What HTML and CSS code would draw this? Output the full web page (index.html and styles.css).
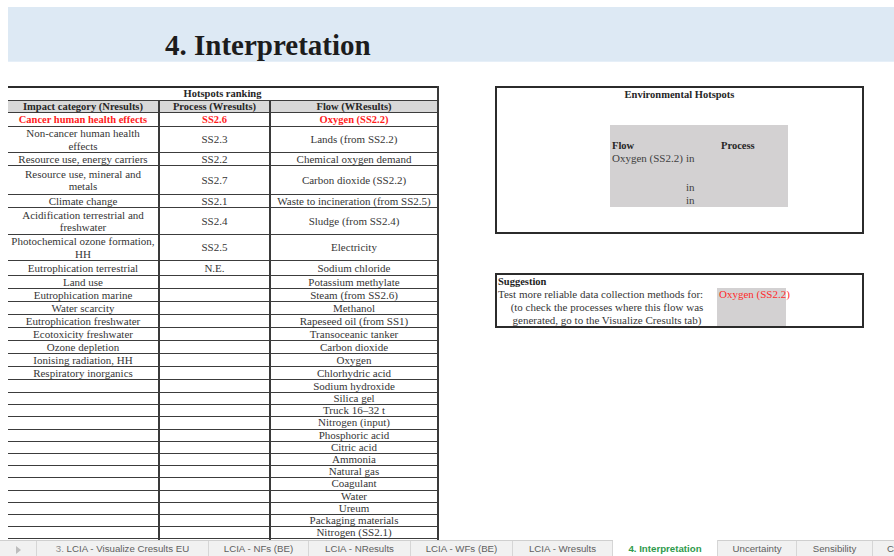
FILE: index.html
```html
<!DOCTYPE html>
<html lang="en">
<head>
<meta charset="utf-8">
<title>4. Interpretation</title>
<link rel="stylesheet" href="styles.css">
</head>
<body>
<div class="sheet">
  <header class="banner">
    <h1 class="title">4. Interpretation</h1>
  </header>

  <main class="content">
    <table class="ranking">
      <colgroup>
        <col class="c-impact">
        <col class="c-process">
        <col class="c-flow">
      </colgroup>
      <tbody>
        <tr class="r-caption"><td colspan="3" class="caption">Hotspots ranking</td></tr>
        <tr class="r-head">
          <th>Impact category (Nresults)</th>
          <th>Process (Wresults)</th>
          <th>Flow (WResults)</th>
        </tr>
        <tr class="r-top">
          <td>Cancer human health effects</td>
          <td>SS2.6</td>
          <td>Oxygen (SS2.2)</td>
        </tr>
        <tr class="r-h26 r-wrap"><td>Non-cancer human health<br>effects</td><td>SS2.3</td><td>Lands (from SS2.2)</td></tr>
        <tr class="r-h13"><td>Resource use, energy carriers</td><td>SS2.2</td><td>Chemical oxygen demand</td></tr>
        <tr class="r-h29 r-wrap"><td>Resource use, mineral and<br>metals</td><td>SS2.7</td><td>Carbon dioxide (SS2.2)</td></tr>
        <tr class="r-h13"><td>Climate change</td><td>SS2.1</td><td>Waste to incineration (from SS2.5)</td></tr>
        <tr class="r-h27 r-wrap"><td>Acidification terrestrial and<br>freshwater</td><td>SS2.4</td><td>Sludge (from SS2.4)</td></tr>
        <tr class="r-h26 r-wrap"><td>Photochemical ozone formation,<br>HH</td><td>SS2.5</td><td>Electricity</td></tr>
        <tr class="r-h15"><td>Eutrophication terrestrial</td><td>N.E.</td><td>Sodium chloride</td></tr>
        <tr class="r-h13"><td>Land use</td><td></td><td>Potassium methylate</td></tr>
        <tr class="r-h13"><td>Eutrophication marine</td><td></td><td>Steam (from SS2.6)</td></tr>
        <tr class="r-h13"><td>Water scarcity</td><td></td><td>Methanol</td></tr>
        <tr class="r-h13"><td>Eutrophication freshwater</td><td></td><td>Rapeseed oil (from SS1)</td></tr>
        <tr class="r-h13"><td>Ecotoxicity freshwater</td><td></td><td>Transoceanic tanker</td></tr>
        <tr class="r-h13"><td>Ozone depletion</td><td></td><td>Carbon dioxide</td></tr>
        <tr class="r-h13"><td>Ionising radiation, HH</td><td></td><td>Oxygen</td></tr>
        <tr class="r-h13"><td>Respiratory inorganics</td><td></td><td>Chlorhydric acid</td></tr>
        <tr class="r-h13"><td></td><td></td><td>Sodium hydroxide</td></tr>
        <tr><td></td><td></td><td>Silica gel</td></tr>
        <tr><td></td><td></td><td>Truck 16–32 t</td></tr>
        <tr><td></td><td></td><td>Nitrogen (input)</td></tr>
        <tr><td></td><td></td><td>Phosphoric acid</td></tr>
        <tr><td></td><td></td><td>Citric acid</td></tr>
        <tr><td></td><td></td><td>Ammonia</td></tr>
        <tr><td></td><td></td><td>Natural gas</td></tr>
        <tr><td></td><td></td><td>Coagulant</td></tr>
        <tr><td></td><td></td><td>Water</td></tr>
        <tr><td></td><td></td><td>Ureum</td></tr>
        <tr><td></td><td></td><td>Packaging materials</td></tr>
        <tr><td></td><td></td><td>Nitrogen (SS2.1)</td></tr>
        <tr><td></td><td></td><td></td></tr>
        <tr><td></td><td></td><td></td></tr>
      </tbody>
    </table>

    <aside class="panels">
      <section class="hotspots">
        <h2 class="box-title">Environmental Hotspots</h2>
        <div class="hs-grid">
          <span class="hs-blank"></span>
          <span class="hs-head">Flow</span><span></span><span class="hs-head">Process</span>
          <span>Oxygen (SS2.2)</span><span>in</span><span></span>
          <span class="hs-blank hs-gap"></span>
          <span></span><span>in</span><span></span>
          <span></span><span>in</span><span></span>
        </div>
      </section>

      <section class="suggestion">
        <h2 class="sg-title">Suggestion</h2>
        <p class="sg-lead">Test more reliable data collection methods for:</p>
        <p class="sg-flow">Oxygen (SS2.2)</p>
        <p class="sg-note">(to check the processes where this flow was</p>
        <p class="sg-note">generated, go to the Visualize Cresults tab)</p>
      </section>
    </aside>
  </main>

  <nav class="tabs">
    <span class="tab tab-nav"><span class="tab-arrow"></span></span>
    <span class="tab"><span class="tab-num">3.</span> LCIA - Visualize Cresults EU</span>
    <span class="tab">LCIA - NFs (BE)</span>
    <span class="tab">LCIA - NResults</span>
    <span class="tab">LCIA - WFs (BE)</span>
    <span class="tab">LCIA - Wresults</span>
    <span class="tab tab-active">4. Interpretation</span>
    <span class="tab">Uncertainty</span>
    <span class="tab">Sensibility</span>
    <span class="tab tab-last">Conclusions</span>
  </nav>
</div>
</body>
</html>
```

FILE: styles.css
```css
* {
  box-sizing: border-box;
}

html, body {
  margin: 0;
  padding: 0;
  background: #ffffff;
}

body {
  font-family: "Liberation Serif", "Times New Roman", serif;
  color: #363636;
}

.sheet {
  width: 894px;
  height: 556px;
  display: flex;
  flex-direction: column;
  overflow: hidden;
}

/* ---------- title banner ---------- */
.banner {
  flex-shrink: 0;
  margin: 7px 0 0 8px;
  height: 55px;
  background: #dde9f4;
  border-bottom: 1px solid #e6eff8;
  padding: 22px 0 0 157px;
}

.title {
  margin: 0;
  font-family: "Liberation Serif", serif;
  font-weight: bold;
  font-size: 29px;
  line-height: 32px;
  color: #1c1c1c;
}

/* ---------- sheet content ---------- */
.content {
  flex: 1;
  min-height: 0;
  overflow: hidden;
  display: flex;
  align-items: flex-start;
  padding: 24px 0 0 8px;
}

/* ranking table; cell heights are border-box row pitches */
.ranking {
  flex-shrink: 0;
  width: 430px;
  table-layout: fixed;
  border-collapse: collapse;
  border-top: 2px solid #2b2b2b;
  border-right: 2px solid #1f1f1f;
  font-size: 11px;
  line-height: 11px;
}

.c-impact { width: 151px; }
.c-process { width: 111px; }
.c-flow { width: 168px; }

.ranking td,
.ranking th {
  padding: 0 1px;
  height: 12.2px;
  text-align: center;
  vertical-align: middle;
  white-space: nowrap;
  overflow: hidden;
  border-bottom: 1px solid #3c3c3c;
  border-right: 2px solid #3a3a3a;
}

.ranking .caption {
  height: 11px;
  padding-bottom: 1px;
  font-weight: bold;
  font-size: 10.5px;
  color: #262626;
}

.ranking th {
  height: 12px;
  background: #d8d8d8;
  font-weight: bold;
  font-size: 10.5px;
  color: #262626;
}

.r-top td {
  height: 14px;
  color: #ff1c1c;
  font-weight: bold;
  font-size: 10.5px;
}

.r-wrap td { line-height: 12.3px; }

.r-h13 td { height: 13px; }
.r-h15 td { height: 15px; }
.r-h26 td { height: 26px; }
.r-h27 td { height: 27px; }
.r-h29 td { height: 29px; }

/* right-hand panels */
.panels {
  margin-left: 56px;
  display: flex;
  flex-direction: column;
  gap: 39px;
}

.hotspots {
  width: 369px;
  height: 148px;
  border: 2px solid #2b2b2b;
  padding-top: 1px;
}

.box-title {
  margin: 0;
  text-align: center;
  font-size: 10.5px;
  line-height: 12px;
  font-weight: bold;
  color: #262626;
}

.hs-grid {
  margin: 24px 0 0 113px;
  width: 178px;
  background: #d3d1d2;
  display: grid;
  grid-template-columns: 74px 35px 69px;
  grid-template-rows: 14px 13px 13px 16px 13px 13px;
  font-size: 11px;
  line-height: 13px;
  color: #404040;
}

.hs-grid span {
  padding-left: 2px;
  white-space: nowrap;
}

.hs-blank {
  grid-column: 1 / -1;
}

.hs-head {
  font-weight: bold;
  font-size: 10.5px;
  color: #262626;
}

.suggestion {
  width: 369px;
  height: 55px;
  border: 2px solid #2b2b2b;
  display: grid;
  grid-template-columns: 220px 69px 1fr;
  grid-template-rows: 13px 13px 13px 12px;
  font-size: 11px;
  line-height: 13px;
  color: #363636;
}

.suggestion p,
.suggestion h2 {
  margin: 0;
  white-space: nowrap;
}

.sg-title {
  grid-column: 1 / -1;
  padding-left: 1px;
  font-size: 10.5px;
  font-weight: bold;
  color: #1f1f1f;
}

.sg-lead {
  grid-column: 1;
  padding-left: 1px;
}

.sg-flow {
  grid-column: 2;
  grid-row: 2 / 5;
  background: #d3d1d2;
  color: #ff2a2a;
  padding-left: 2px;
}

.sg-note {
  grid-column: 1;
  text-align: center;
}

/* ---------- sheet tabs ---------- */
.tabs {
  flex-shrink: 0;
  height: 16px;
  display: grid;
  grid-template-columns: 37px 172px 100px 102px 102px 100px 105px 79px 76px 80px;
  background: #f1f1f1;
  border-top: 1px solid #cfcfcf;
  font-family: "Liberation Sans", Arial, sans-serif;
  font-size: 9.7px;
  line-height: 12px;
  color: #5f5f5f;
  white-space: nowrap;
}

.tab {
  padding-top: 2px;
  text-align: center;
  overflow: hidden;
  border-right: 1px solid #d6d6d6;
}

.tab-last {
  text-align: left;
  padding-left: 14px;
}

.tab-nav {
  padding: 0;
  display: flex;
  align-items: center;
  justify-content: center;
}

.tab-arrow {
  width: 0;
  height: 0;
  margin-top: 2px;
  border-left: 5px solid #bdbdbd;
  border-top: 4px solid transparent;
  border-bottom: 4px solid transparent;
}

.tab-num {
  color: #8a8a8a;
}

.tab-active {
  background: #ffffff;
  margin-top: -1px;
  padding-top: 3px;
  color: #2e9b4c;
  font-weight: bold;
}
```
